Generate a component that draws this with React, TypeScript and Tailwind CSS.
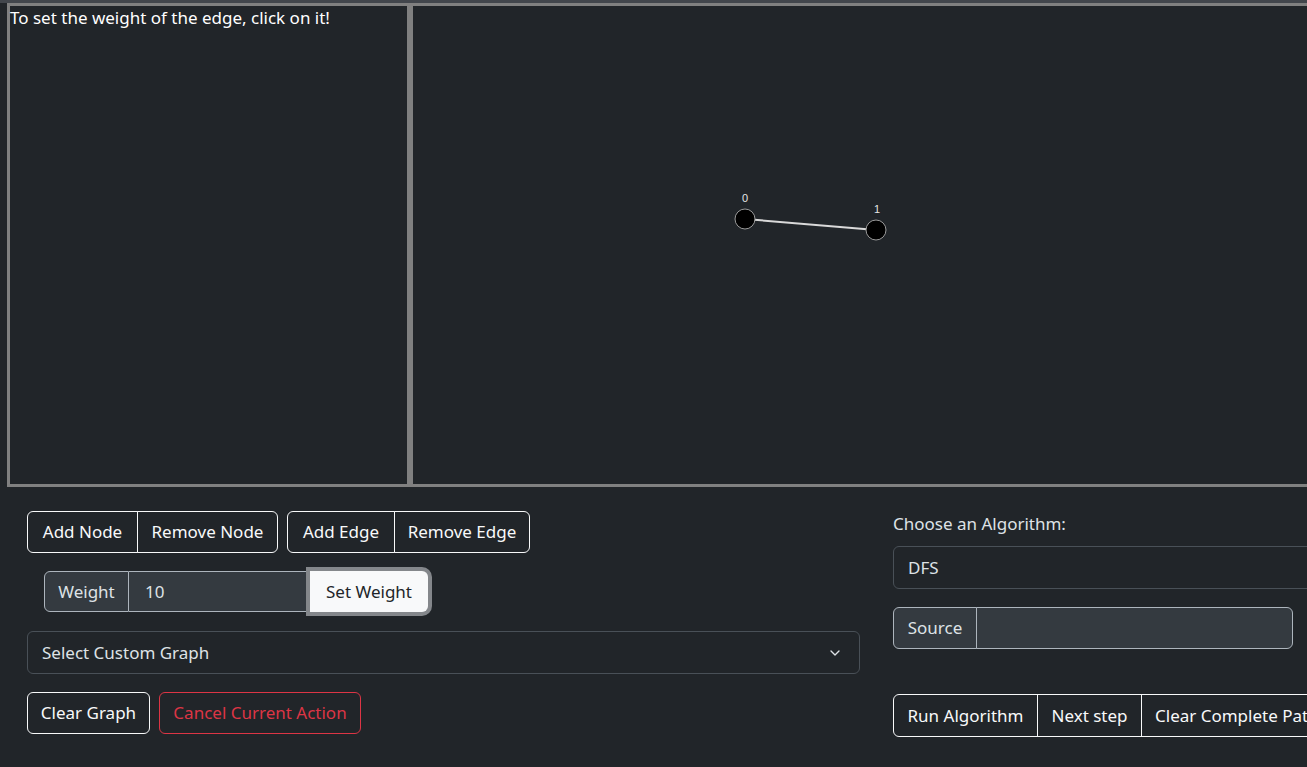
import { ChevronDown } from 'lucide-react';

const font = { fontFamily: '"Noto Sans", "Open Sans", sans-serif' };

function GraphCanvas() {
  return (
    <svg className="w-full h-full block" viewBox="0 0 896 478">
      <line x1="332" y1="213" x2="463" y2="224" stroke="#d9d9d9" strokeWidth="2" />
      <circle cx="332" cy="213" r="10" fill="#000" stroke="#9a9a9a" strokeWidth="1" />
      <circle cx="463" cy="224" r="10" fill="#000" stroke="#9a9a9a" strokeWidth="1" />
      <text x="332" y="196" textAnchor="middle" fontSize="11" fill="#e5e5e5" fontFamily="Liberation Sans, sans-serif">0</text>
      <text x="464" y="207" textAnchor="middle" fontSize="11" fill="#e5e5e5" fontFamily="Liberation Sans, sans-serif">1</text>
    </svg>
  );
}

export default function App() {
  const btn = 'shrink-0 h-[42px] border border-[#f8f9fa] text-[#f8f9fa] text-[17px] flex items-center justify-center';

  return (
    <div className="w-[1307px] h-[767px] overflow-hidden bg-[#212529] text-[#dee2e6]" style={font}>
      {/* top panels */}
      <div className="h-[3px] bg-[#42464c]" />
      <div className="flex h-[484px]">
        <div className="ml-[7px] w-[403px] shrink-0 border-[3px] border-[#808080] text-white text-[17px] leading-[24px]">
          To set the weight of the edge, click on it!
        </div>
        <div className="w-[902px] shrink-0 border-[3px] border-[#808080]">
          <GraphCanvas />
        </div>
      </div>

      {/* controls */}
      <div className="flex">
        <div className="ml-[27px] w-[833px] shrink-0">
          <div className="flex gap-[9px] mt-[24px]">
            <div className="flex">
              <button className={`${btn} w-[111px] rounded-l-[6px]`}>Add Node</button>
              <button className={`${btn} w-[141px] -ml-px rounded-r-[6px]`}>Remove Node</button>
            </div>
            <div className="flex">
              <button className={`${btn} w-[108px] rounded-l-[6px]`}>Add Edge</button>
              <button className={`${btn} w-[136px] -ml-px rounded-r-[6px]`}>Remove Edge</button>
            </div>
          </div>

          <div className="flex mt-[18px] ml-[17px] h-[41px] text-[17px]">
            <span className="w-[85px] flex items-center justify-center bg-[#343a40] border border-[#adb5bd] rounded-l-[6px]">Weight</span>
            <input
              className="w-[181px] bg-[#343a40] border-y border-[#adb5bd] pl-[16px] text-[#dee2e6] outline-none"
              defaultValue="10"
            />
            <button className="w-[118px] bg-[#f8f9fa] text-[#212529] rounded-r-[6px] ring-[4px] ring-[#84878b] flex items-center justify-center">Set Weight</button>
          </div>

          <div className="mt-[19px] h-[43px] border border-[#495057] rounded-[6px] flex items-center justify-between pl-[14px] pr-[16px] text-[17px]">
            <span>Select Custom Graph</span>
            <ChevronDown size={16} strokeWidth={2} className="text-[#dee2e6]" />
          </div>

          <div className="flex gap-[9px] mt-[18px]">
            <button className={`${btn} w-[123px] rounded-[6px]`}>Clear Graph</button>
            <button className="h-[42px] w-[202px] border border-[#dc3545] text-[#dc3545] text-[17px] rounded-[6px]">Cancel Current Action</button>
          </div>
        </div>

        <div className="ml-[33px] w-[450px] shrink-0">
          <div className="mt-[25px] text-[17px] leading-[24px]">Choose an Algorithm:</div>
          <div className="mt-[10px] h-[43px] border border-[#495057] rounded-[6px] flex items-center pl-[14px] text-[17px]">DFS</div>
          <div className="flex mt-[18px] h-[42px] w-[400px] text-[17px]">
            <span className="w-[84px] flex items-center justify-center bg-[#343a40] border border-[#adb5bd] rounded-l-[6px]">Source</span>
            <input className="flex-1 -ml-px bg-[#343a40] border border-[#adb5bd] rounded-r-[6px] outline-none" />
          </div>
          <div className="flex mt-[45px]">
            <button className={`${btn} w-[145px] rounded-l-[6px] h-[43px]`}>Run Algorithm</button>
            <button className={`${btn} w-[105px] -ml-px h-[43px]`}>Next step</button>
            <button className={`${btn} w-[190px] -ml-px h-[43px] rounded-r-[6px] justify-start pl-[13px]`}>Clear Complete Path</button>
          </div>
        </div>
      </div>
    </div>
  );
}
